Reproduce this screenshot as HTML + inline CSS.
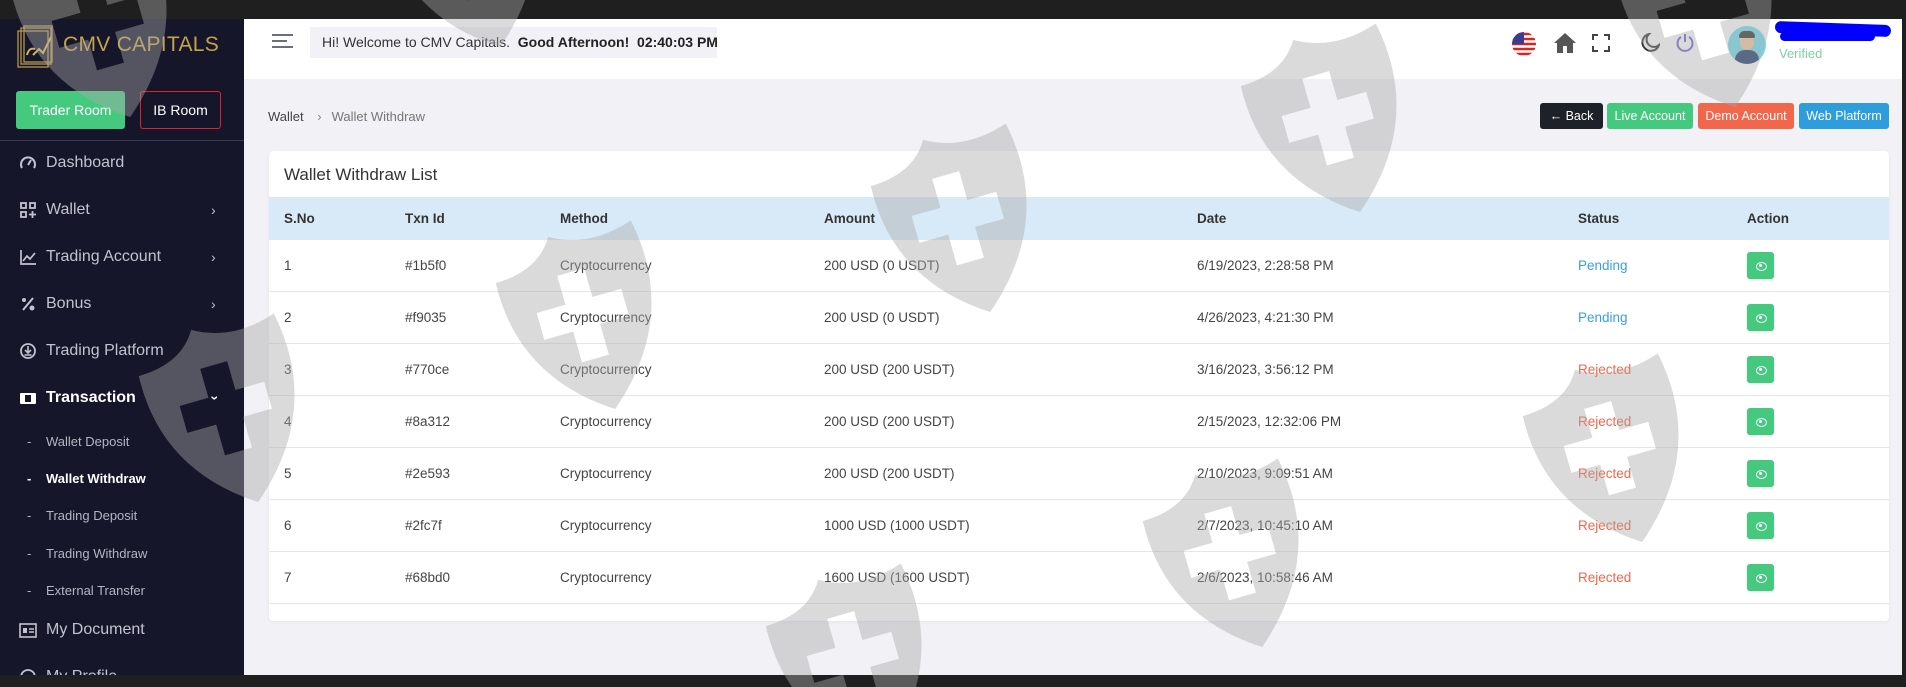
<!DOCTYPE html>
<html style="overflow:hidden"><head><meta charset="utf-8"><style>
*{box-sizing:border-box;margin:0;padding:0}
html,body{width:1906px;height:687px;overflow:hidden}
body{background:#1f1f1f;font-family:"Liberation Sans",sans-serif;position:relative}
.abs{position:absolute}
#side{left:0;top:19px;width:244px;height:656px;background:#15162a;overflow:hidden}
#main{left:244px;top:19px;width:1658px;height:656px;background:#f1f1f6;overflow:hidden}
#hdr{left:0;top:0;width:1658px;height:60px;background:#fff}
.mi{position:absolute;left:0;width:244px;color:#c3c3cf;font-size:16px;line-height:20px}
.mi .ic{position:absolute;left:19px;top:1px;width:18px;height:18px}
.mi .t{position:absolute;left:46px;top:0;white-space:nowrap}
.mi .ch{position:absolute;left:211px;top:0;font-size:14px}
.sub{position:absolute;left:27px;color:#b5b5c2;font-size:13px;line-height:16px;white-space:nowrap}
.sub span{position:absolute;left:19px}
.btn{position:absolute;top:103px;height:26px;border-radius:3px;color:#fff;font-size:12.5px;line-height:26px;text-align:center}
#card{left:25px;top:132px;width:1620px;height:470px;background:#fff;border-radius:4px;box-shadow:0 1px 3px rgba(0,0,0,.06)}
.th{position:absolute;top:0;font-size:13.5px;font-weight:bold;color:#333;line-height:43px}
.row{position:absolute;left:0;width:1620px;height:52px;border-bottom:1px solid #e6e6e6;font-size:13.5px;color:#444}
.row div{position:absolute;top:0;line-height:52px;white-space:nowrap}
.eye{position:absolute;left:1478px;top:12px;width:27px;height:27px;background:#45c97f;border-radius:3px;box-shadow:0 1px 2px rgba(0,0,0,.12)}
.eye:before{content:"";position:absolute;left:9px;top:10px;width:9px;height:7px;border:1.5px solid #fff;border-radius:50%}
.eye:after{content:"";position:absolute;left:12px;top:12px;width:3px;height:3px;background:#fff;border-radius:50%}
</style></head><body>

<div id="side" class="abs">
  <svg class="abs" style="left:17px;top:6px" width="40" height="44" viewBox="0 0 40 44"><g fill="none" stroke="#b8974a" stroke-width="1.3"><rect x="1" y="6" width="30" height="36"/><rect x="4" y="3" width="30" height="36"/><rect x="7" y="1" width="28" height="36"/></g><path d="M10 30 Q12 22 18 24 M16 30 L22 24 L26 28 L34 12" fill="none" stroke="#d4b35a" stroke-width="2"/></svg>
  <div class="abs" style="left:63px;top:14px;font-size:21px;color:#c4a44a;letter-spacing:0.3px">CMV CAPITALS</div>
  <div class="abs" style="left:16px;top:72px;width:109px;height:38px;background:#45c97f;border-radius:3px;color:#fff;font-size:14px;line-height:38px;text-align:center">Trader Room</div>
  <div class="abs" style="left:140px;top:72px;width:81px;height:38px;border:1px solid #e0202a;border-radius:3px;color:#fff;font-size:14px;line-height:36px;text-align:center">IB Room</div>
  <div class="abs" style="left:0;top:121px;width:244px;height:1px;background:#3a3b50"></div>

  <div class="mi" style="top:134px"><svg class="ic" viewBox="0 0 18 18"><path d="M3 14 A7 7 0 1 1 15 14" fill="none" stroke="#c3c3cf" stroke-width="2"/><path d="M9 11 L12 6" stroke="#c3c3cf" stroke-width="2"/></svg><span class="t">Dashboard</span></div>
  <div class="mi" style="top:181px"><svg class="ic" viewBox="0 0 18 18"><g fill="none" stroke="#c3c3cf" stroke-width="1.8"><rect x="2" y="2" width="5" height="5"/><rect x="11" y="2" width="5" height="5"/><rect x="2" y="11" width="5" height="5"/><path d="M13.5 10v7M10 13.5h7"/></g></svg><span class="t">Wallet</span><span class="ch">›</span></div>
  <div class="mi" style="top:228px"><svg class="ic" viewBox="0 0 18 18"><path d="M2 2V16H17M4 13L8 8L11 11L16 5" fill="none" stroke="#c3c3cf" stroke-width="1.7"/></svg><span class="t">Trading Account</span><span class="ch">›</span></div>
  <div class="mi" style="top:275px"><svg class="ic" viewBox="0 0 18 18"><circle cx="5" cy="5" r="2" fill="#c3c3cf"/><circle cx="13" cy="13" r="2.5" fill="#c3c3cf"/><path d="M14 3L4 15" stroke="#c3c3cf" stroke-width="2"/></svg><span class="t">Bonus</span><span class="ch">›</span></div>
  <div class="mi" style="top:322px"><svg class="ic" viewBox="0 0 18 18"><circle cx="9" cy="9" r="7" fill="none" stroke="#c3c3cf" stroke-width="1.8"/><path d="M9 4v6M6 8l3 3 3-3M5.5 13h7" fill="none" stroke="#c3c3cf" stroke-width="1.6"/></svg><span class="t">Trading Platform</span></div>
  <div class="mi" style="top:369px;color:#fff;font-weight:bold"><svg class="ic" viewBox="0 0 18 18"><rect x="1" y="4" width="16" height="11" rx="1" fill="#fff"/><rect x="6" y="6" width="6" height="7" fill="#15162a"/></svg><span class="t">Transaction</span><span class="ch" style="transform:rotate(90deg);left:213px">›</span></div>
  <div class="sub" style="top:415px">-<span>Wallet Deposit</span></div>
  <div class="sub" style="top:452px;color:#fff;font-weight:bold">-<span>Wallet Withdraw</span></div>
  <div class="sub" style="top:489px">-<span>Trading Deposit</span></div>
  <div class="sub" style="top:527px">-<span>Trading Withdraw</span></div>
  <div class="sub" style="top:564px">-<span>External Transfer</span></div>
  <div class="mi" style="top:601px"><svg class="ic" viewBox="0 0 18 18"><rect x="1" y="3" width="16" height="13" fill="none" stroke="#c3c3cf" stroke-width="1.6"/><rect x="4" y="7" width="4" height="5" fill="#c3c3cf"/><path d="M10 8h5M10 11h5" stroke="#c3c3cf" stroke-width="1.5"/></svg><span class="t">My Document</span></div>
  <div class="mi" style="top:648px"><svg class="ic" viewBox="0 0 18 18"><circle cx="9" cy="9" r="7" fill="none" stroke="#c3c3cf" stroke-width="1.8"/></svg><span class="t">My Profile</span><span class="ch" style="transform:rotate(90deg);left:213px">›</span></div>
</div>

<div id="main" class="abs">
  <div id="hdr" class="abs">
    <svg class="abs" style="left:28px;top:14px" width="22" height="18"><path d="M0 2h21M0 8h15M0 14h21" stroke="#6b6e80" stroke-width="2"/></svg>
    <div class="abs" style="left:66px;top:8px;width:407px;height:31px;background:#f1f1f7;font-size:14px;line-height:31px;color:#333;padding-left:12px;white-space:nowrap;overflow:hidden">Hi! Welcome to CMV Capitals.&nbsp; <b style="font-weight:600;color:#222">Good Afternoon!&nbsp; 02:40:03 PM</b></div>
    <svg class="abs" style="left:1268px;top:13px" width="24" height="24" viewBox="0 0 24 24"><defs><clipPath id="fc"><circle cx="12" cy="12" r="12"/></clipPath></defs><g clip-path="url(#fc)"><rect width="24" height="24" fill="#fff"/><path d="M0 2h24M0 7h24M0 12h24M0 17h24M0 22h24" stroke="#d22" stroke-width="2.4"/><rect width="12" height="12" fill="#3c3b8e"/></g></svg>
    <svg class="abs" style="left:1309px;top:13px" width="24" height="22" viewBox="0 0 24 22"><path d="M12 1L1 11h3v10h6v-7h4v7h6V11h3z" fill="#555"/></svg>
    <svg class="abs" style="left:1348px;top:15px" width="18" height="18" viewBox="0 0 18 18"><path d="M1 6V1h5M12 1h5v5M17 12v5h-5M6 17H1v-5" fill="none" stroke="#444" stroke-width="2"/></svg>
    <svg class="abs" style="left:1396px;top:14px" width="20" height="20" viewBox="0 0 20 20"><path d="M9 1A8.5 8.5 0 1 0 19 12 A7 7 0 0 1 9 1z" fill="none" stroke="#333" stroke-width="2"/></svg>
    <svg class="abs" style="left:1431px;top:14px" width="20" height="20" viewBox="0 0 20 20"><path d="M6 4A7.5 7.5 0 1 0 14 4M10 1v8" fill="none" stroke="#6c63d6" stroke-width="2"/></svg>
    <div class="abs" style="left:1484px;top:7px;width:38px;height:38px;border-radius:50%;background:#72dcec;overflow:hidden">
      <div class="abs" style="left:7px;top:24px;width:24px;height:20px;border-radius:10px 10px 0 0;background:#1d3b6e"></div>
      <div class="abs" style="left:12px;top:7px;width:14px;height:17px;border-radius:7px;background:#f3c9a0"></div>
      <div class="abs" style="left:11px;top:5px;width:16px;height:7px;border-radius:7px 7px 2px 2px;background:#333"></div>
    </div>
    <div class="abs" style="left:1531px;top:4px;width:116px;height:12px;background:#0000ff;border-radius:6px;transform:rotate(2deg)"></div>
    <div class="abs" style="left:1536px;top:13px;width:95px;height:9px;background:#0000ff;border-radius:5px"></div>
    <div class="abs" style="left:1535px;top:27px;font-size:13px;color:#7fd0a0">Verified</div>
  </div>

  <div class="abs" style="left:24px;top:90px;font-size:13px;color:#444">Wallet <span style="color:#888;margin:0 10px">›</span><span style="color:#777">Wallet Withdraw</span></div>
  <div class="btn" style="left:1296px;width:63px;top:84px;background:#1e2127">&#8592; Back</div>
  <div class="btn" style="left:1363px;width:86px;top:84px;background:#45c97f">Live Account</div>
  <div class="btn" style="left:1454px;width:96px;top:84px;background:#f0674b">Demo Account</div>
  <div class="btn" style="left:1555px;width:90px;top:84px;background:#2d9ddc">Web Platform</div>

  <div id="card" class="abs">
    <div class="abs" style="left:15px;top:14px;font-size:17px;color:#333">Wallet Withdraw List</div>
    <div class="abs" style="left:0;top:46px;width:1620px;height:43px;background:#d8eaf8">
      <div class="th" style="left:15px">S.No</div><div class="th" style="left:136px">Txn Id</div><div class="th" style="left:291px">Method</div><div class="th" style="left:555px">Amount</div><div class="th" style="left:928px">Date</div><div class="th" style="left:1309px">Status</div><div class="th" style="left:1478px">Action</div>
    </div>
    <div class="row" style="top:89px"><div style="left:15px">1</div><div style="left:136px">#1b5f0</div><div style="left:291px">Cryptocurrency</div><div style="left:555px">200 USD (0 USDT)</div><div style="left:928px">6/19/2023, 2:28:58 PM</div><div style="left:1309px;color:#3a9fdf">Pending</div><span class="eye"></span></div>
    <div class="row" style="top:141px"><div style="left:15px">2</div><div style="left:136px">#f9035</div><div style="left:291px">Cryptocurrency</div><div style="left:555px">200 USD (0 USDT)</div><div style="left:928px">4/26/2023, 4:21:30 PM</div><div style="left:1309px;color:#3a9fdf">Pending</div><span class="eye"></span></div>
    <div class="row" style="top:193px"><div style="left:15px">3</div><div style="left:136px">#770ce</div><div style="left:291px">Cryptocurrency</div><div style="left:555px">200 USD (200 USDT)</div><div style="left:928px">3/16/2023, 3:56:12 PM</div><div style="left:1309px;color:#f0674b">Rejected</div><span class="eye"></span></div>
    <div class="row" style="top:245px"><div style="left:15px">4</div><div style="left:136px">#8a312</div><div style="left:291px">Cryptocurrency</div><div style="left:555px">200 USD (200 USDT)</div><div style="left:928px">2/15/2023, 12:32:06 PM</div><div style="left:1309px;color:#f0674b">Rejected</div><span class="eye"></span></div>
    <div class="row" style="top:297px"><div style="left:15px">5</div><div style="left:136px">#2e593</div><div style="left:291px">Cryptocurrency</div><div style="left:555px">200 USD (200 USDT)</div><div style="left:928px">2/10/2023, 9:09:51 AM</div><div style="left:1309px;color:#f0674b">Rejected</div><span class="eye"></span></div>
    <div class="row" style="top:349px"><div style="left:15px">6</div><div style="left:136px">#2fc7f</div><div style="left:291px">Cryptocurrency</div><div style="left:555px">1000 USD (1000 USDT)</div><div style="left:928px">2/7/2023, 10:45:10 AM</div><div style="left:1309px;color:#f0674b">Rejected</div><span class="eye"></span></div>
    <div class="row" style="top:401px"><div style="left:15px">7</div><div style="left:136px">#68bd0</div><div style="left:291px">Cryptocurrency</div><div style="left:555px">1600 USD (1600 USDT)</div><div style="left:928px">2/6/2023, 10:58:46 AM</div><div style="left:1309px;color:#f0674b">Rejected</div><span class="eye"></span></div>
  </div>
</div>

<svg class="abs" style="left:0;top:0" width="1906" height="687">
  <defs>
    <path id="sh" fill-rule="evenodd" d="M-75,-62 Q-30,-62 -12,-92 Q25,-70 72,-85 Q92,20 5,92 Q-80,35 -75,-62Z M-14,-52 h28 v30 h30 v28 h-30 v32 h-28 v-32 h-30 v-28 h30z"/>
  </defs>
  <g fill="rgba(170,170,170,0.43)">
    <use href="#sh" transform="translate(100,30) rotate(-16)"/>
    <use href="#sh" transform="translate(470,-40) rotate(-16)"/>
    <use href="#sh" transform="translate(228,415) rotate(-16)"/>
    <use href="#sh" transform="translate(585,322) rotate(-16)"/>
    <use href="#sh" transform="translate(960,225) rotate(-16)"/>
    <use href="#sh" transform="translate(1330,125) rotate(-16)"/>
    <use href="#sh" transform="translate(1705,20) rotate(-16)"/>
    <use href="#sh" transform="translate(1612,455) rotate(-16)"/>
    <use href="#sh" transform="translate(1232,560) rotate(-16)"/>
    <use href="#sh" transform="translate(855,665) rotate(-16)"/>
  </g>
</svg>
</body></html>
